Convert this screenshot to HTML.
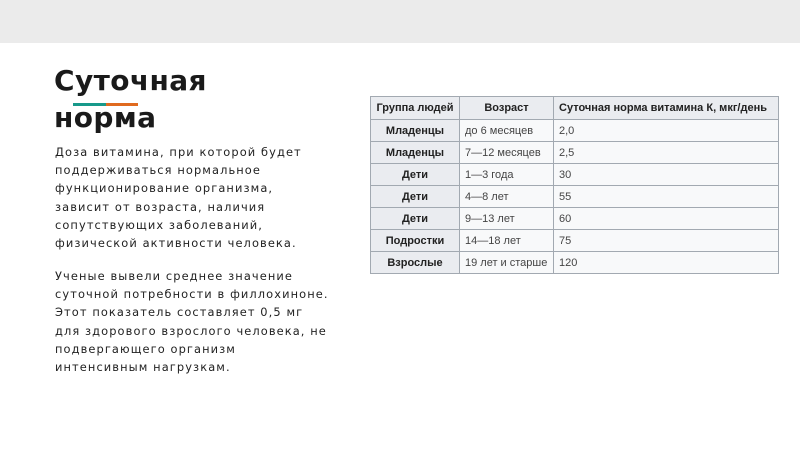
<!DOCTYPE html>
<html><head><meta charset="utf-8"><style>
*{margin:0;padding:0;box-sizing:border-box}
body{width:800px;height:450px;background:#fff;position:relative;overflow:hidden;font-family:"DejaVu Sans","Liberation Sans",sans-serif;color:#222}
.top{position:absolute;left:0;top:0;width:800px;height:43px;background:#ebebeb}
h1{position:absolute;left:54px;top:62px;font-size:28px;line-height:37px;font-weight:bold;color:#1a1a1a;letter-spacing:0.4px}
.l1{position:absolute;left:73px;top:103px;width:33px;height:3px;background:#17998a}
.l2{position:absolute;left:106px;top:103px;width:32px;height:3px;background:#e06a1f}
.p{position:absolute;left:55px;white-space:nowrap;font-size:11.4px;line-height:18.2px;letter-spacing:1.1px;color:#222}
table{position:absolute;left:370px;top:96px;border-collapse:collapse;font-family:"Liberation Sans",Arial,sans-serif;font-size:11px;color:#333;border:1px solid #a2a9b1}
td,th{border:1px solid #a2a9b1;height:22px;padding:0 5px}
th{background:#eaecf0;font-weight:bold;color:#222;text-align:center}
td.h{background:#eaecf0;font-weight:bold;text-align:center;color:#222}
td{background:#f8f9fa;color:#444}
</style></head><body>
<div class="top"></div>
<h1>Суточная<br>норма</h1>
<div class="l1"></div><div class="l2"></div>
<div class="p" style="top:143px">Доза витамина, при которой будет<br>поддерживаться нормальное<br>функционирование организма,<br>зависит от возраста, наличия<br>сопутствующих заболеваний,<br>физической активности человека.</div>
<div class="p" style="top:267px">Ученые вывели среднее значение<br>суточной потребности в филлохиноне.<br>Этот показатель составляет 0,5 мг<br>для здорового взрослого человека, не<br>подвергающего организм<br>интенсивным нагрузкам.</div>
<table>
<tr><th style="width:89px;height:23px">Группа людей</th><th style="width:94px">Возраст</th><th style="width:225px;text-align:left">Суточная норма витамина К, мкг/день</th></tr>
<tr><td class="h">Младенцы</td><td>до 6 месяцев</td><td>2,0</td></tr>
<tr><td class="h">Младенцы</td><td>7—12 месяцев</td><td>2,5</td></tr>
<tr><td class="h">Дети</td><td>1—3 года</td><td>30</td></tr>
<tr><td class="h">Дети</td><td>4—8 лет</td><td>55</td></tr>
<tr><td class="h">Дети</td><td>9—13 лет</td><td>60</td></tr>
<tr><td class="h">Подростки</td><td>14—18 лет</td><td>75</td></tr>
<tr><td class="h">Взрослые</td><td>19 лет и старше</td><td>120</td></tr>
</table>
</body></html>
